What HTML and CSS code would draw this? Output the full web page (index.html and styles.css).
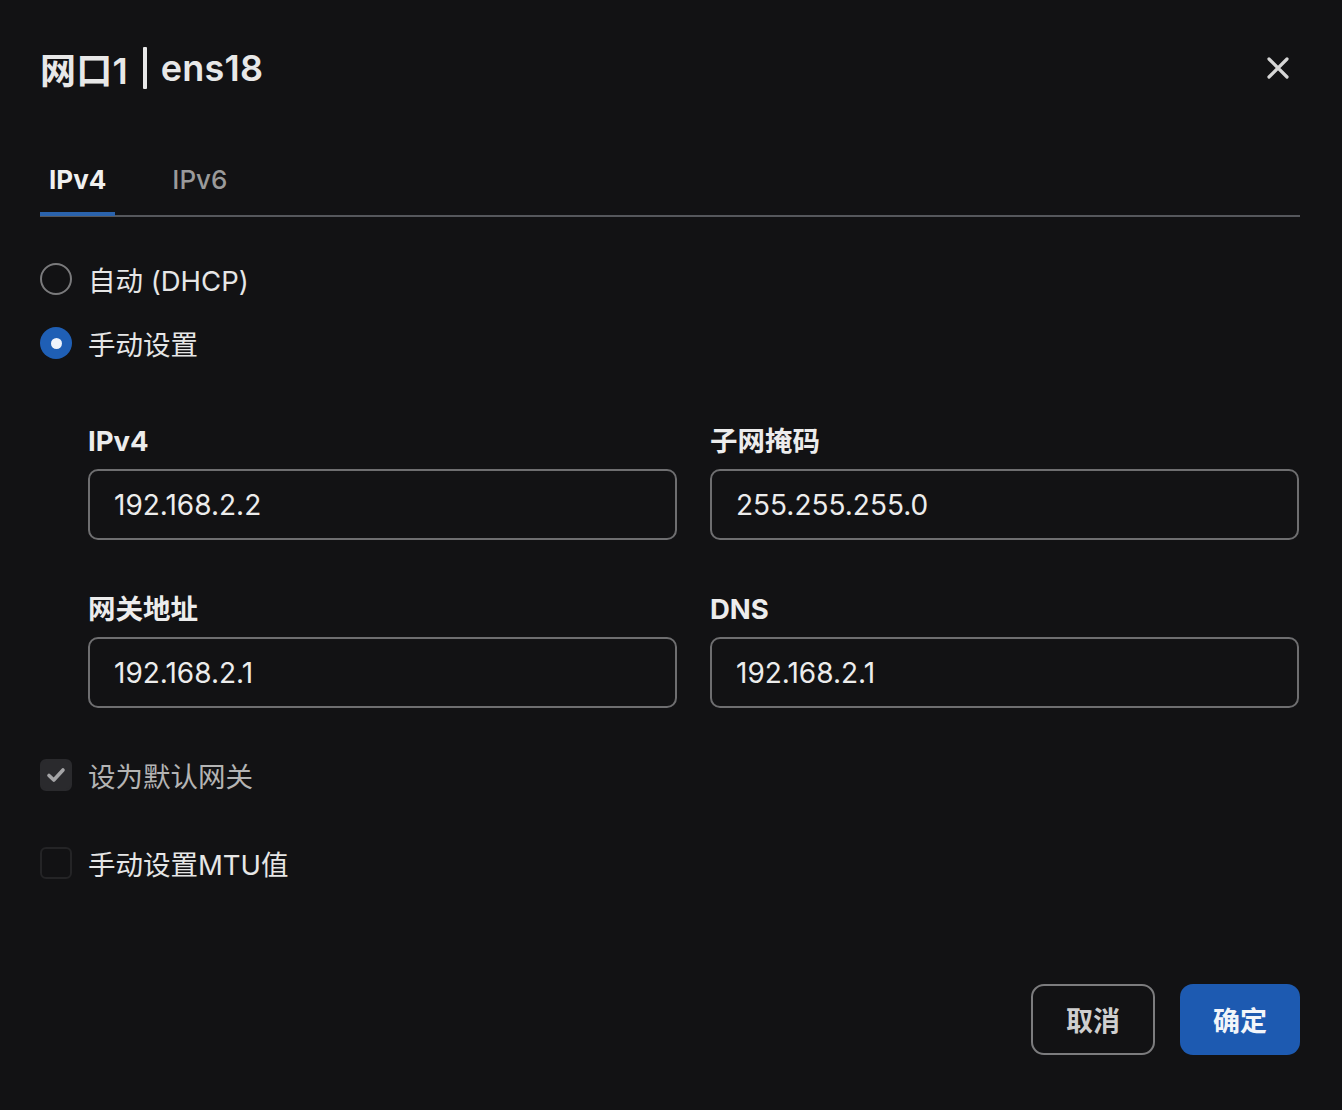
FILE: index.html
```html
<!DOCTYPE html>
<html lang="zh">
<head>
<meta charset="utf-8">
<link rel="stylesheet" href="styles.css">
</head>
<body>
<div class="dialog">
  <div class="header">
    <h1 class="title"><span>网口1</span><span class="bar"></span><span>ens18</span></h1>
    <button class="close" aria-label="关闭">
      <svg width="24" height="24" viewBox="0 0 24 24"><path d="M3 3 L21 21 M21 3 L3 21" stroke="#d6d6d6" stroke-width="3.2" stroke-linecap="round"/></svg>
    </button>
  </div>
  <div class="tabs">
    <div class="tab active">IPv4</div>
    <div class="tab">IPv6</div>
  </div>
  <div class="radios">
    <label class="radio"><span class="circle"></span><span>自动 (DHCP)</span></label>
    <label class="radio"><span class="circle on"></span><span>手动设置</span></label>
  </div>
  <div class="grid">
    <div class="field">
      <div class="flabel">IPv4</div>
      <div class="input">192.168.2.2</div>
    </div>
    <div class="field">
      <div class="flabel">子网掩码</div>
      <div class="input">255.255.255.0</div>
    </div>
    <div class="field">
      <div class="flabel">网关地址</div>
      <div class="input">192.168.2.1</div>
    </div>
    <div class="field">
      <div class="flabel">DNS</div>
      <div class="input">192.168.2.1</div>
    </div>
  </div>
  <div class="checks">
    <label class="check disabled"><span class="box checked"><svg width="24" height="24" viewBox="0 0 24 24"><path d="M5 12.5 L9.8 17 L19 7" fill="none" stroke="#a4a4a6" stroke-width="3.6" stroke-linecap="round" stroke-linejoin="round"/></svg></span><span>设为默认网关</span></label>
    <label class="check"><span class="box"></span><span>手动设置MTU值</span></label>
  </div>
  <div class="footer">
    <button class="btn cancel">取消</button>
    <button class="btn ok">确定</button>
  </div>
</div>
</body>
</html>
```
FILE: styles.css
```css
* { box-sizing: border-box; }
html, body { margin: 0; padding: 0; background: #121214; }
body {
  font-family: Inter, "Noto Sans CJK SC", sans-serif;
  color: #e6e6e6;
  width: 1342px;
  height: 1110px;
  overflow: hidden;
}
.dialog {
  padding: 0 42px 0 40px;
  display: flex;
  flex-direction: column;
}
.header {
  display: flex;
  justify-content: space-between;
  align-items: center;
  height: 136px;
}
.title {
  margin: 0;
  font-size: 36px;
  font-weight: 600;
  color: #e8e8e8;
  display: flex;
  align-items: center;
  letter-spacing: 0.2px;
}
.title .bar {
  display: inline-block;
  width: 4px;
  height: 42px;
  background: #e8e8e8;
  margin: 0 14px 0 15px;
  border-radius: 1px;
}
.close {
  background: none;
  border: 0;
  padding: 0;
  margin-right: 10px;
  display: flex;
  cursor: pointer;
}
.tabs {
  display: flex;
  border-bottom: 2px solid #55575c;
  height: 81px;
}
.tab {
  font-size: 26px;
  font-weight: 500;
  color: #9a9a9a;
  padding: 10px 9px 0;
  margin-right: 48px;
  display: flex;
  align-items: center;
  border-bottom: 4px solid transparent;
  margin-bottom: -3px;
  height: 80px;
}
.tab.active {
  color: #f0f0f0;
  font-weight: 700;
  border-bottom-color: #2a63ad;
}
.radios {
  display: flex;
  flex-direction: column;
  gap: 32px;
  margin-top: 46px;
}
.radio {
  display: flex;
  align-items: center;
  gap: 16px;
  font-size: 27.5px;
  color: #e6e6e6;
  height: 32px;
}
.circle {
  width: 32px;
  height: 32px;
  border-radius: 50%;
  border: 2px solid #7a7a7c;
  display: flex;
  align-items: center;
  justify-content: center;
}
.circle.on {
  border: 0;
  background: #1f5fb5;
}
.circle.on::after {
  content: "";
  width: 11px;
  height: 11px;
  border-radius: 50%;
  background: #eef3fb;
}
.grid {
  display: grid;
  grid-template-columns: 589px 589px;
  column-gap: 33px;
  row-gap: 52px;
  margin-left: 48px;
  margin-top: 65px;
}
.flabel {
  font-size: 27.5px;
  font-weight: 700;
  color: #ececec;
  height: 34px;
  line-height: 34px;
  margin-bottom: 11px;
}
.input {
  height: 71px;
  border: 2px solid #6e6e70;
  border-radius: 10px;
  display: flex;
  align-items: center;
  padding-left: 24px;
  font-size: 28px;
  color: #ececec;
}
.checks {
  display: flex;
  flex-direction: column;
  gap: 56px;
  margin-top: 51px;
}
.check {
  display: flex;
  align-items: center;
  gap: 16px;
  font-size: 27.5px;
  color: #e6e6e6;
  height: 32px;
}
.check.disabled { color: #b4b4b4; }
.box {
  width: 32px;
  height: 32px;
  border-radius: 6px;
  border: 2px solid #242426;
  background: #121214;
  display: flex;
  align-items: center;
  justify-content: center;
}
.box.checked {
  background: #2a2a2d;
  border-color: #2a2a2d;
}
.footer {
  display: flex;
  justify-content: flex-end;
  gap: 25px;
  margin-top: 105px;
}
.btn {
  height: 71px;
  border-radius: 13px;
  font-family: Inter, "Noto Sans CJK SC", sans-serif;
  font-size: 27px;
  font-weight: 700;
  padding: 0;
}
.btn.cancel {
  width: 124px;
  background: transparent;
  border: 2px solid #7c7c7e;
  color: #cfcfcf;
}
.btn.ok {
  width: 120px;
  background: #1d5ab1;
  border: 0;
  color: #f2f5fa;
}
```
